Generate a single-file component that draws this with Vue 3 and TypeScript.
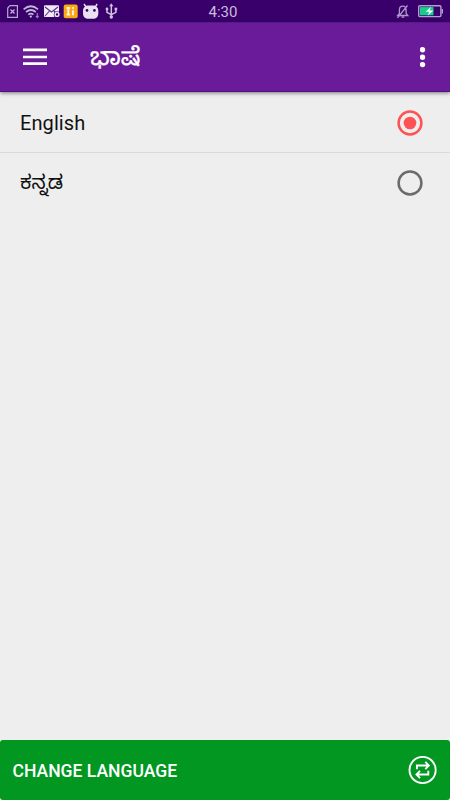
<script setup lang="ts">
import { ref } from 'vue'

interface Language {
  code: string
  label: string
}

const languages: Language[] = [
  { code: 'en', label: 'English' },
  { code: 'kn', label: 'ಕನ್ನಡ' },
]
const selected = ref('en')

function toggleLanguage(): void {
  selected.value = selected.value === 'en' ? 'kn' : 'en'
}
</script>

<template>
  <div class="screen">
    <header class="status">
      <svg class="status-left" width="120" height="22" viewBox="0 0 120 22" fill="none">
        <!-- missing SIM -->
        <path d="M10 5.7h7.4v11.6H7.7V8z" stroke="#b9a8d4" stroke-width="1.2" />
        <path d="M10.5 9.5l4 4M14.5 9.5l-4 4" stroke="#c9bbdf" stroke-width="1.1" />
        <!-- wifi -->
        <g stroke="#c3b6db" stroke-width="1.7">
          <path d="M23.6 9.3Q31 3.2 38 9.3" />
          <path d="M26 12Q31 8 35.8 12" />
          <path d="M28.3 14.6Q31 12.7 33.4 14.6" />
        </g>
        <circle cx="30.8" cy="16.6" r="1.1" fill="#d3c7e4" />
        <path d="M37.3 13v4.5M35.8 16l1.5 1.7 1.3-1.7" stroke="#9c86c0" stroke-width="1.1" />
        <!-- mail -->
        <rect x="44" y="5.2" width="15" height="11.8" rx="1" fill="#f0eaf6" />
        <path d="M45 7l6.5 5L58 7M45 16l4.5-5M54 11l2 2" stroke="#543080" stroke-width="1.1" />
        <circle cx="57" cy="14.4" r="3.2" fill="#39006b" />
        <circle cx="57" cy="14.4" r="1.9" stroke="#eee8f5" stroke-width="1.4" />
        <!-- app badge -->
        <rect x="63.7" y="4.4" width="14" height="13.8" rx="2" fill="#fba914" />
        <path d="M66.5 8h3.6M66.5 14.6h3.6M68.3 8v7M73 10.3v5" stroke="#fff6df" stroke-width="1.9" />
        <circle cx="73" cy="8" r="1.1" fill="#fff6df" />
        <!-- robot head -->
        <path d="M84 4l2 3M97.2 4l-2 3" stroke="#e9e2f1" stroke-width="1.4" />
        <path d="M83 11c0-3.4 2.5-5.4 5.3-5.4h4.7c2.8 0 5.3 2 5.3 5.4v2.2c0 3.8-2.3 5.6-5.2 5.6h-4.8c-2.9 0-5.3-1.8-5.3-5.6z" fill="#e9e2f1" />
        <circle cx="87" cy="10.4" r="1.35" fill="#39006b" />
        <circle cx="94.4" cy="10.4" r="1.35" fill="#39006b" />
        <!-- usb -->
        <path d="M111.3 5v12M107 9v3.4l4.3 2.3 4.6-2.3V9" stroke="#d1c4e2" stroke-width="1.5" />
        <path d="M109.2 6.3l2.1-3 2.1 3z" fill="#d1c4e2" />
        <circle cx="107" cy="9" r="1.4" fill="#d1c4e2" />
        <rect x="114.6" y="7.7" width="2.6" height="2.6" fill="#d1c4e2" />
        <circle cx="111.3" cy="17" r="1.7" fill="#d1c4e2" />
      </svg>
      <span class="clock">4:30</span>
      <svg class="status-right" width="54" height="22" viewBox="396 0 54 22" fill="none">
        <!-- muted bell -->
        <path d="M397.6 15.5h10.2l-1.7-2.2V10c0-2.3-1.2-3.8-3.3-3.8s-3.4 1.5-3.4 3.8v3.3zM401.5 17.2h2.8M397.5 17.8l10-12.3" stroke="#ac98cb" stroke-width="1.3" />
        <!-- battery -->
        <rect x="418.7" y="5.8" width="22.2" height="10.8" rx="1" stroke="#b3a0cd" stroke-width="1.4" />
        <rect x="420" y="7.1" width="13.5" height="8.2" fill="#12cf8e" />
        <path d="M442.3 9v4.6" stroke="#b3a0cd" stroke-width="1.4" />
        <path d="M431 6.8l-5.3 5h3.6l-1.6 4 5.7-5.2h-3.8z" fill="#f3fff8" />
      </svg>
    </header>

    <nav class="toolbar">
      <button class="icon-button" aria-label="Menu">
        <svg width="24" height="18" viewBox="0 0 24 18"><path d="M0 1.8h24M0 9h24M0 15.7h24" stroke="#fff" stroke-width="2.7" /></svg>
      </button>
      <h1 class="title">ಭಾಷೆ</h1>
      <button class="icon-button more" aria-label="More options">
        <svg width="6" height="22" viewBox="0 0 6 22" fill="#fff">
          <circle cx="2.5" cy="3.7" r="2.7" /><circle cx="2.5" cy="11.2" r="2.7" /><circle cx="2.5" cy="18.6" r="2.7" />
        </svg>
      </button>
    </nav>

    <main class="options" role="radiogroup">
      <div
        v-for="language in languages"
        :key="language.code"
        class="option"
        role="radio"
        :aria-checked="selected === language.code"
        @click="selected = language.code"
      >
        <span class="label" :class="language.code">{{ language.label }}</span>
        <svg class="radio" :class="{ checked: selected === language.code }" width="26" height="26" viewBox="0 0 26 26">
          <circle class="ring" cx="13" cy="13" r="11.4" />
          <circle v-if="selected === language.code" class="dot" cx="13" cy="13" r="6.3" />
        </svg>
      </div>
    </main>

    <button class="change" @click="toggleLanguage">
      <span class="change-label">CHANGE LANGUAGE</span>
      <svg width="30" height="30" viewBox="0 0 30 30" fill="none" stroke="#fff" stroke-width="1.9">
        <circle cx="14.6" cy="15" r="13.1" />
        <path d="M8.9 14.2v-3.7h11.6M17.3 6.9l3.5 3.6-3.5 3.6M20.3 15.8v3.7H8.9M12 15.9l-3.5 3.6 3.5 3.6" />
      </svg>
    </button>
  </div>
</template>

<style>
body {
  margin: 0;
}
</style>

<style scoped>
.screen {
  display: flex;
  flex-direction: column;
  height: 800px;
  overflow: hidden;
  background: #eee;
  font-family: Roboto, "Noto Sans", "Noto Sans Kannada", sans-serif;
}
button {
  border: 0;
  padding: 0;
  background: none;
  font: inherit;
  color: inherit;
}
svg {
  display: block;
}
.status {
  display: grid;
  grid-template-columns: 1fr auto 1fr;
  flex: none;
  height: 22px;
  background: #39006b;
}
.status-right {
  justify-self: end;
}
.clock {
  padding-right: 4px;
  color: #c9bcdc;
  font-size: 15px;
  line-height: 24px;
}
.toolbar {
  position: relative;
  display: flex;
  align-items: center;
  flex: none;
  box-sizing: border-box;
  height: 70px;
  padding: 0 24px 0 23px;
  border-top: 1px solid #5c1590;
  border-bottom: 1px solid #580b86;
  background: #6a1b9a;
  color: #fff;
  box-shadow: 0 1px 4px rgba(0, 0, 0, 0.5);
}
.title {
  margin: 0 0 0 43px;
  font-size: 24.6px;
  font-weight: 400;
  line-height: 40px;
  -webkit-text-stroke: 0.25px #fff;
}
.more {
  margin-left: auto;
}
.options {
  flex: 1;
}
.option {
  display: flex;
  align-items: center;
  justify-content: space-between;
  box-sizing: border-box;
  height: 60px;
  padding: 1px 27px 0 20px;
  color: #111;
}
.option + .option {
  padding-top: 0;
  border-top: 1px solid #dadada;
}
.label {
  font-size: 20px;
  line-height: 30px;
}
.label.en {
  letter-spacing: 0.08px;
}
.label.kn {
  padding-bottom: 2px;
}
.ring {
  fill: none;
  stroke: #6b6b6b;
  stroke-width: 2.5;
}
.checked .ring {
  stroke: #ff5252;
}
.dot {
  fill: #ff5252;
}
.change {
  display: flex;
  align-items: center;
  justify-content: space-between;
  flex: none;
  height: 60px;
  padding: 0 12px 0 12.5px;
  border-radius: 3px;
  background: #019721;
  color: #fff;
  font-size: 17.55px;
  font-weight: 500;
}
.change-label {
  padding-top: 2px;
}
</style>
